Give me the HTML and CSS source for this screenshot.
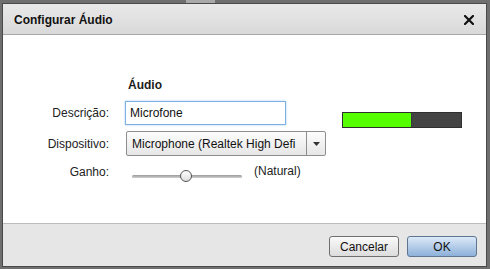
FILE: index.html
```html
<!DOCTYPE html>
<html>
<head>
  <link rel="stylesheet" href="styles.css">
</head>
<body>
  <div class="backdrop-tab"></div>
  <div class="dialog">
    <div class="dialog-header">
      <span class="dialog-title">Configurar Áudio</span>
      <svg class="close-icon" width="10" height="10" viewBox="0 0 10 10">
        <path d="M1 1 L9 9 M9 1 L1 9" stroke="#111" stroke-width="2.2" stroke-linecap="square"/>
      </svg>
    </div>

    <div class="dialog-body">
      <div class="form-grid">
        <span></span>
        <span class="section-title">Áudio</span>
        <span></span>

        <label class="field-label" for="descricao">Descrição:</label>
        <div class="text-input" id="descricao">Microfone</div>
        <div class="level-meter">
          <div class="level-fill"></div>
        </div>

        <label class="field-label">Dispositivo:</label>
        <div class="select-box">
          <span class="select-text">Microphone (Realtek High Defi</span>
          <span class="select-arrow">
            <svg width="7" height="4" viewBox="0 0 7 4"><path d="M0 0 L7 0 L3.5 4 Z" fill="#333"/></svg>
          </span>
        </div>

        <label class="field-label">Ganho:</label>
        <div class="gain-row">
          <div class="slider">
            <div class="slider-track"></div>
            <div class="slider-thumb"></div>
          </div>
          <span class="gain-value">(Natural)</span>
        </div>
      </div>
    </div>

    <div class="dialog-footer">
      <button class="btn">Cancelar</button>
      <button class="btn btn-primary">OK</button>
    </div>
  </div>
</body>
</html>
```

FILE: styles.css
```css
/* Audio settings dialog */
body {
  margin: 0;
  height: 269px;
  overflow: hidden;
  background-color: #6f6f6f;
  font-family: "Liberation Sans", Arial, sans-serif;
  font-size: 12px;
  color: #1c1c1c;
  position: relative;
}

.backdrop-tab {
  position: absolute;
  top: 0;
  left: 186px;
  width: 29px;
  height: 3px;
  background-color: #a9a9a9;
}

.dialog {
  margin: 3px 0 0 2px;
  width: 483px;
  height: 262px;
  border: 1px solid #4a4a4a;
  background-color: #fff;
  display: flex;
  flex-direction: column;
}

.dialog-header {
  height: 30px;
  border-bottom: 1px solid #a8a8a8;
  background: linear-gradient(#e9e9e9, #d9d9d9);
  display: flex;
  align-items: center;
  justify-content: space-between;
  padding: 0 12px 0 11px;
}

.dialog-title {
  font-weight: bold;
  color: #111;
  margin-top: 1px;
}

.close-icon {
  display: block;
  margin-top: 1px;
}

.dialog-body {
  flex: 1;
  padding-top: 42px;
}

.form-grid {
  display: grid;
  grid-template-columns: 106px 201px 120px;
  column-gap: 16px;
  row-gap: 6px;
  align-items: center;
}

.section-title {
  font-weight: bold;
  padding-left: 3px;
  line-height: 16px;
  margin-bottom: 2px;
}

.field-label {
  text-align: right;
  color: #222;
}

.text-input {
  width: 151px;
  height: 22px;
  line-height: 22px;
  padding: 0 4px;
  border: 1px solid #7fb0e2;
  box-shadow: 0 0 2px #a9cdf2;
  background-color: #fff;
  color: #111;
}

.level-meter {
  align-self: start;
  grid-row: span 2;
  margin-top: 11px;
  width: 118px;
  height: 14px;
  border: 1px solid #2f2f2f;
  background-color: #444;
}

.level-fill {
  width: 68px;
  height: 100%;
  background-color: #55ff00;
  border-right: 1px solid #3a3a3a;
}

.select-box {
  margin-left: 1px;
  width: 198px;
  height: 23px;
  border: 1px solid #8e8e8e;
  border-radius: 2px;
  background: linear-gradient(#fdfdfd, #e6e6e6);
  display: flex;
  align-items: center;
}

.select-text {
  flex: 1;
  white-space: nowrap;
  padding-left: 5px;
  color: #111;
}

.select-arrow {
  width: 18px;
  height: 100%;
  border-left: 1px solid #8e8e8e;
  display: flex;
  align-items: center;
  justify-content: center;
}

.select-arrow svg {
  display: block;
}

.gain-row {
  display: flex;
  align-items: center;
  height: 20px;
}

.slider {
  position: relative;
  width: 110px;
  height: 20px;
  margin-left: 7px;
}

.slider-track {
  position: absolute;
  top: 13px;
  left: 0;
  right: 0;
  height: 3px;
  border-radius: 2px;
  background: linear-gradient(#9a9a9a, #d0d0d0);
}

.slider-thumb {
  position: absolute;
  top: 8px;
  left: 48px;
  width: 10px;
  height: 10px;
  border: 1px solid #555;
  border-radius: 50%;
  background: linear-gradient(#ffffff, #dedede);
}

.gain-value {
  margin-left: 12px;
  margin-top: -2px;
  color: #222;
}

.dialog-footer {
  border-top: 1px solid #bcbcbc;
  background-color: #e6e6e6;
  display: flex;
  justify-content: flex-end;
  align-items: flex-start;
  gap: 8px;
  padding: 12px 9px 0 0;
  box-sizing: border-box;
  height: 43px;
}

.btn {
  width: 70px;
  height: 21px;
  padding: 0;
  font-family: "Liberation Sans", Arial, sans-serif;
  font-size: 12px;
  color: #111;
  border: 1px solid #707070;
  border-radius: 3px;
  background: linear-gradient(#fafafa, #dcdcdc);
}

.btn-primary {
  border-color: #5f7590;
  background: linear-gradient(#dce9f8, #8db0d9);
}
```
